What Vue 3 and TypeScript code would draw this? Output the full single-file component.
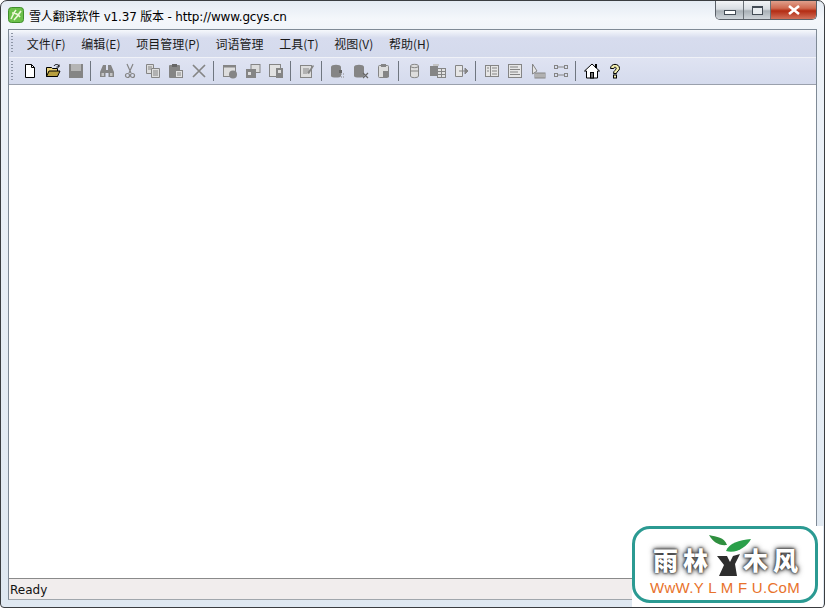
<template>
  <div class="window">
    <div class="titlebar">
      <svg class="app-icon" width="16" height="16" viewBox="0 0 16 16">
        <rect x="0.5" y="0.5" width="15" height="15" rx="3" fill="#6cc04a" stroke="#3f8f2c" />
        <path d="M3 12C5 8 6 5 8 3M6 13C9 10 11 7 13 4M4 6C7 6 10 7 12 10" stroke="#eef8d8" stroke-width="1.6" fill="none" />
      </svg>
      <span class="title">雪人翻译软件 v1.37 版本 - http://www.gcys.cn</span>
      <div class="controls">
        <div class="ctl ctl-min"><i></i></div>
        <div class="ctl ctl-max"><i></i></div>
        <div class="ctl ctl-close">
          <svg width="14" height="10" viewBox="0 0 14 10">
            <path d="M2 1L12 9M12 1L2 9" stroke="#fff" stroke-width="2.6" />
          </svg>
        </div>
      </div>
    </div>

    <div class="frame">
      <div class="menubar">
        <div class="gripper"></div>
        <span v-for="m in menus" :key="m" class="menu-item">{{ m }}</span>
      </div>
      <div class="toolbar">
        <div class="gripper"></div>
        <template v-for="(t, i) in tools" :key="i">
          <div v-if="t === '|'" class="sep"></div>
          <div v-else class="tool">
            <svg width="16" height="16" viewBox="0 0 16 16" v-html="icons[t]"></svg>
          </div>
        </template>
      </div>
      <div class="client"></div>
      <div class="statusbar">Ready</div>
    </div>

    <div class="badge-back">
      <div class="badge">
        <div class="badge-name">
          <span>雨林</span>
          <svg class="badge-tree" width="43" height="43" viewBox="0 0 43 43">
            <path d="M0 1C8 3 15 3 18 11C10 12 4 8 0 1Z" fill="#2f8f3f" />
            <path d="M17 17C20 9 30 6 42 5C38 13 27 20 17 17Z" fill="#2aa04a" />
            <path d="M8 22L18 22L21 28L24 22L31 20L26 30L28 42L10 42L15 31Z" fill="#2e2e2e" />
          </svg>
          <span>木风</span>
        </div>
        <div class="badge-url">WwW.Y L M F U.CoM</div>
      </div>
    </div>
  </div>
</template>

<script setup lang="ts">
const menus = ["文件(F)", "编辑(E)", "项目管理(P)", "词语管理", "工具(T)", "视图(V)", "帮助(H)"];

const G = "#858585";
const L = "#c4c4c4";

const icons: Record<string, string> = {
  new: `<path d="M3.5 1.5H9.5L12.5 4.5V14.5H3.5Z" fill="#fff" stroke="#000"/><path d="M9.5 1.5V4.5H12.5" fill="none" stroke="#000"/>`,
  open: `<path d="M1.5 13.5V4.5H6.5L7.5 5.5H12.5V13.5Z" fill="#e8d27a" stroke="#000"/><path d="M1.5 13.5L4 8H15L12.5 13.5Z" fill="#b8a040" stroke="#000"/><path d="M9 3C10 1 13 1 14 3" fill="none" stroke="#000"/><path d="M14 1.5V4H11.5" fill="none" stroke="#000"/>`,
  save: `<rect x="1" y="1" width="14" height="14" fill="${G}"/><rect x="3" y="1" width="10" height="7" fill="#b5b5b5"/>`,
  find: `<path d="M1 9L4 2H7V7H9V2H12L15 9V14H9.5V10H6.5V14H1Z" fill="${G}"/><rect x="2.5" y="10" width="2.5" height="3" fill="${L}"/><rect x="11" y="10" width="2.5" height="3" fill="${L}"/>`,
  cut: `<path d="M5 1L9 10M11 1L7 10" stroke="${G}" stroke-width="1.2" fill="none"/><circle cx="5.5" cy="12.5" r="2" fill="none" stroke="${G}" stroke-width="1.2"/><circle cx="10.5" cy="12.5" r="2" fill="none" stroke="${G}" stroke-width="1.2"/>`,
  copy: `<path d="M1.5 1.5H8.5V10.5H1.5Z" fill="#ddd" stroke="${G}"/><path d="M3 4H7M3 6H6" stroke="${G}"/><path d="M6.5 5.5H14.5V14.5H6.5Z" fill="#ddd" stroke="${G}"/><path d="M8 8H13M8 10H13M8 12H13" stroke="${G}"/>`,
  paste: `<rect x="1" y="2" width="11" height="13" rx="1" fill="${G}"/><rect x="4" y="1" width="5" height="3" fill="#666"/><rect x="7.5" y="7.5" width="7" height="7" fill="#e2e2e2" stroke="${G}"/><path d="M9 10H13M9 12H13" stroke="${G}"/>`,
  del: `<path d="M2 2L14 14M14 2L2 14" stroke="${G}" stroke-width="1.7"/>`,
  win1: `<rect x="1.5" y="2.5" width="12" height="11" fill="#ddd" stroke="${G}"/><rect x="1" y="2" width="13" height="2.5" fill="${G}"/><circle cx="11" cy="11.5" r="4" fill="${G}"/>`,
  win2: `<rect x="6" y="1.5" width="9" height="8" fill="#ddd" stroke="${G}"/><rect x="1" y="6" width="10" height="9" fill="${G}"/><rect x="3" y="9" width="3" height="3" fill="#ddd"/>`,
  win3: `<rect x="1.5" y="1.5" width="11" height="12" fill="#e2e2e2" stroke="${G}"/><rect x="8" y="5" width="7" height="10" fill="${G}"/><rect x="10" y="7" width="3" height="3" fill="#ddd"/>`,
  edit: `<rect x="1.5" y="2.5" width="11" height="12" fill="#ddd" stroke="${G}"/><path d="M4 6H10M4 8H10M4 10H8" stroke="${G}"/><path d="M8 10L14 2L15 3L10 11Z" fill="${G}"/>`,
  db1: `<path d="M1 4C1 1 11 1 11 4V13C11 15 1 15 1 13Z" fill="${G}"/><rect x="9" y="7" width="3" height="3" fill="#666"/><path d="M11 11H15M11 14H15" stroke="${G}" stroke-dasharray="1 1"/>`,
  db2: `<path d="M1 4C1 1 11 1 11 4V13C11 15 1 15 1 13Z" fill="${G}"/><path d="M10 10L15 15M15 10L10 15" stroke="#666" stroke-width="1.2"/>`,
  db3: `<rect x="2.5" y="2.5" width="10" height="12" rx="1" fill="#ddd" stroke="${G}"/><rect x="5" y="1" width="5" height="3" fill="${G}"/><rect x="7" y="8" width="6" height="6" fill="${G}"/>`,
  cyl: `<path d="M3.5 3C3.5 .8 11.5 .8 11.5 3V13C11.5 15.2 3.5 15.2 3.5 13Z" fill="#ddd" stroke="${G}"/><path d="M3.5 3C3.5 5.2 11.5 5.2 11.5 3M3.5 8H11.5" fill="none" stroke="${G}"/>`,
  grid: `<rect x="0" y="3" width="8" height="10" fill="${G}"/><rect x="7.5" y="5.5" width="8" height="9" fill="#e2e2e2" stroke="${G}"/><path d="M7.5 8.5H15.5M7.5 11.5H15.5M11.5 5.5V14.5" stroke="${G}"/><path d="M3 1H9V3H3Z" fill="${L}"/>`,
  export: `<path d="M2.5 2.5H9.5V13.5H2.5Z" fill="#e6e6e6" stroke="${G}"/><path d="M6 8H12M12 5L15 8L12 11Z" fill="${G}" stroke="${G}"/>`,
  view1: `<rect x="1.5" y="2.5" width="13" height="11" fill="#e6e6e6" stroke="${G}"/><path d="M6.5 2.5V13.5M8 5H13M8 8H13M8 11H13M3 5H5M3 8H5" stroke="${G}"/>`,
  view2: `<rect x="1.5" y="1.5" width="13" height="13" fill="#e6e6e6" stroke="${G}"/><path d="M3 4H11M3 6.5H13M3 9H11M3 11.5H13" stroke="${G}"/>`,
  view3: `<path d="M2.5 1V11L7 8Z" fill="#e6e6e6" stroke="${G}"/><rect x="5" y="10" width="10" height="5" fill="#ddd" stroke="${G}"/><path d="M7 10V15M9 10V15M11 10V15M13 10V15" stroke="${G}"/>`,
  view4: `<g fill="none" stroke="${G}"><rect x="1.5" y="2.5" width="3" height="3"/><rect x="11.5" y="2.5" width="3" height="3"/><rect x="1.5" y="10.5" width="3" height="3"/><rect x="11.5" y="10.5" width="3" height="3"/><path d="M5 4H11M5 12H11"/></g>`,
  home: `<path d="M8 1L15.5 8H13.5V15H2.5V8H0.5Z" fill="#fff" stroke="#000"/><rect x="6.5" y="9.5" width="3" height="5.5" fill="#777" stroke="#000"/><rect x="11" y="1" width="2" height="4" fill="#000"/>`,
  help: `<path d="M3.5 5.5C3.5 0 12.5 0 12.5 5.5C12.5 8.3 9.5 8 9.5 10.5H6.5C6.5 7 9.2 7.5 9.2 5.3C9.2 3.8 6.8 3.8 6.8 5.5Z" fill="#f4f0b0" stroke="#000"/><rect x="6.5" y="12" width="3" height="3" fill="#f4f0b0" stroke="#000"/>`,
};

const tools = [
  "new", "open", "save", "|",
  "find", "cut", "copy", "paste", "del", "|",
  "win1", "win2", "win3", "|",
  "edit", "|",
  "db1", "db2", "db3", "|",
  "cyl", "grid", "export", "|",
  "view1", "view2", "view3", "view4", "|",
  "home", "help",
];
</script>

<style>
html,
body {
  margin: 0;
  background: #fff;
}
</style>

<style scoped>
.window {
  position: relative;
  width: 825px;
  height: 608px;
  box-sizing: border-box;
  display: flex;
  flex-direction: column;
  padding: 0 7px 7px 7px;
  background: linear-gradient(180deg, #e4ebf3 0, #f4f7fb 18px, #edf2f8 40px, #dfe8f1 100%);
  border: 1px solid #3a3d40;
  border-radius: 7px 7px 4px 4px;
  overflow: hidden;
  font-family: "Noto Sans CJK SC", "Liberation Sans", sans-serif;
}

.titlebar {
  height: 28px;
  flex-shrink: 0;
  display: flex;
  align-items: center;
  font-size: 12px;
  color: #000;
}

.app-icon {
  margin-top: -1px;
}

.title {
  margin-left: 5px;
  font-family: "DejaVu Sans", "Noto Sans CJK SC", sans-serif;
  font-size: 12px;
  letter-spacing: -0.17px;
  margin-top: 1px;
}

.controls {
  margin-left: auto;
  align-self: flex-start;
  display: flex;
  height: 19px;
  border: 1px solid #5a6068;
  border-top: none;
  border-radius: 0 0 5px 5px;
  overflow: hidden;
  box-sizing: border-box;
}

.ctl {
  display: flex;
  align-items: center;
  justify-content: center;
  height: 100%;
}

.ctl-min {
  width: 28px;
}

.ctl-max {
  width: 27px;
}

.ctl-min,
.ctl-max {
  background: linear-gradient(180deg, #f2f4f6 0, #d8dde2 45%, #a9b0b6 55%, #cfd5da 100%);
  border-right: 1px solid #6a7076;
  box-sizing: border-box;
}

.ctl-min i {
  display: block;
  width: 10px;
  height: 3px;
  margin-top: 5px;
  border: 1px solid #444c55;
  background: #fff;
}

.ctl-max i {
  display: block;
  width: 9px;
  height: 6px;
  border: 1px solid #444c55;
  border-top-width: 2px;
  background: #e8ecef;
}

.ctl-close {
  width: 45px;
  background: linear-gradient(180deg, #e0a08c 0, #cf6a50 40%, #b32c14 55%, #d2715a 100%);
}

.frame {
  flex: 1;
  min-height: 0;
  display: flex;
  flex-direction: column;
  border: 1px solid #7f8a96;
  border-bottom-color: #a0a6ac;
  background: #fff;
}

.menubar {
  height: 27px;
  flex-shrink: 0;
  display: flex;
  align-items: center;
  padding-left: 2px;
  font-size: 12px;
  color: #1a1a1a;
  background: linear-gradient(180deg, #f6f8fc 0, #d7dcee 8px, #d4daec 100%);
  border-bottom: 1px solid #f0f2f8;
}

.gripper {
  width: 2px;
  align-self: stretch;
  margin: 3px 0;
  background-image: linear-gradient(180deg, #8d95a5 50%, transparent 50%);
  background-size: 2px 3px;
  flex-shrink: 0;
}

.menu-item {
  padding: 0 7.85px;
  white-space: nowrap;
}

.menu-item:first-of-type {
  margin-left: 6px;
}

.toolbar {
  height: 26px;
  flex-shrink: 0;
  display: flex;
  align-items: center;
  padding-left: 2px;
  background: linear-gradient(180deg, #dfe3f2 0, #d5dbed 100%);
  border-bottom: 1px solid #9aa0ac;
}

.toolbar > .gripper {
  margin-right: 5px;
}

.tool {
  width: 23px;
  height: 23px;
  flex-shrink: 0;
  display: flex;
  align-items: center;
  justify-content: center;
}

.sep {
  width: 1px;
  height: 20px;
  margin: 0 4px 0 3px;
  flex-shrink: 0;
  background: #6f7680;
}

.client {
  flex: 1;
  min-height: 0;
  background: #fff;
}

.statusbar {
  height: 21px;
  flex-shrink: 0;
  box-sizing: border-box;
  padding: 3px 0 0 1px;
  font-family: "DejaVu Sans", sans-serif;
  font-size: 12px;
  line-height: 16px;
  color: #111;
  background: #f1eded;
  border-top: 1px solid #8a8a8a;
}

.badge-back {
  position: absolute;
  left: 631px;
  top: 525px;
  width: 191px;
  height: 81px;
  box-sizing: border-box;
  background: #fff;
  border-radius: 16px 0 0 0;
}

.badge {
  width: 186px;
  height: 77px;
  box-sizing: border-box;
  display: flex;
  flex-direction: column;
  align-items: center;
  border: 3px solid #2b9a92;
  border-radius: 18px;
}

.badge-name {
  display: flex;
  align-items: flex-end;
  height: 47px;
  padding-left: 6px;
  font-family: "Noto Sans CJK SC", sans-serif;
  font-weight: 900;
  font-size: 25px;
  line-height: 33px;
  color: #fff;
  text-shadow: 0 0 2px #333, 0 0 3px #444, 0 0 5px #555, 0 0 6px #777;
}

.badge-name span {
  letter-spacing: 5px;
}

.badge-tree {
  margin: 0 -9px -1px -4px;
}

.badge-url {
  font-family: "Liberation Sans", sans-serif;
  font-size: 15px;
  line-height: 18px;
  margin-top: 3px;
  letter-spacing: 0.3px;
  white-space: nowrap;
  color: #e8722c;
}
</style>
